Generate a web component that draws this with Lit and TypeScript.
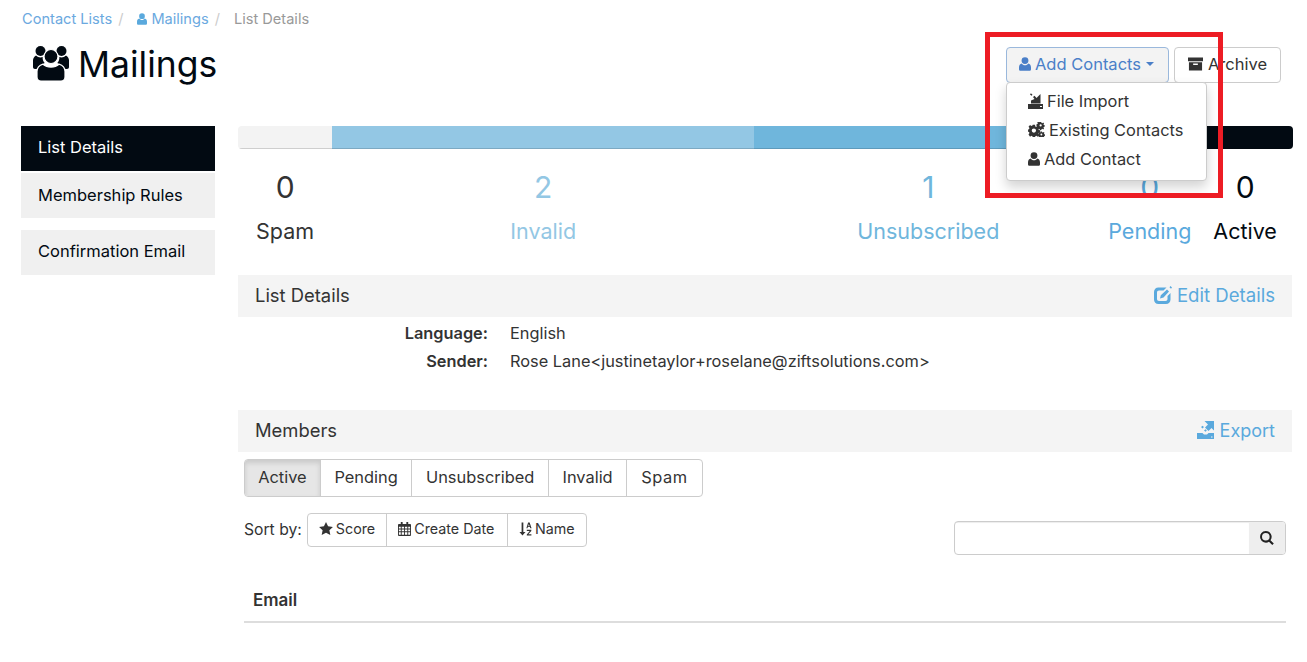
import { LitElement, css, html, svg } from 'lit';
import { customElement } from 'lit/decorators.js';

const icon = (cls: string, box: string, body: unknown) =>
  html`<svg class="icon ${cls}" viewBox=${box} fill="currentColor" aria-hidden="true">${body}</svg>`;

const userIcon = (cls = '') =>
  icon(
    cls,
    '0 0 14 16',
    svg`<path d="M7 8a4 4 0 1 0 0-8 4 4 0 0 0 0 8zM3.200 7.300C1.200 7.700 0 9.400 0 12v2.200C0 15.400.8 16 2 16h10c1.200 0 2-.6 2-1.800V12c0-2.600-1.200-4.300-3.200-4.700C10 8.600 8.700 9.400 7 9.400s-3-.8-3.800-2.100z"/>`
  );

const usersIcon = () =>
  icon(
    'users',
    '0 0 36 35',
    svg`<circle cx="7.500" cy="5" r="5"/><circle cx="28.500" cy="5" r="5"/>
      <path d="M3 9.500c1.200 1.300 3 2 4.500 2 .8 0 1.500-.1 2.200-.4-.3 2.400.5 4.400 2 6-2.800 1-4.700 3-5.200 6H2c-1.200 0-2-.8-2-2v-6.500c0-2.200 1-4 3-5.100zM33 9.500c-1.200 1.300-3 2-4.500 2-.8 0-1.500-.1-2.200-.4.3 2.400-.5 4.400-2 6 2.800 1 4.700 3 5.200 6H34c1.200 0 2-.8 2-2v-6.500c0-2.200-1-4-3-5.100z"/>
      <circle cx="18" cy="10.500" r="7" stroke="#fff" stroke-width="1.200"/>
      <path d="M10 18.200c2 1.800 5 2.900 8 2.900s6-1.100 8-2.900c3.500 1 6 3.600 6 7.300v5.500c0 2.400-1.600 4-4 4H8c-2.400 0-4-1.600-4-4v-5.500c0-3.700 2.500-6.300 6-7.300z" stroke="#fff" stroke-width="1.200"/>`
  );

const trayIcon = (cls: string) =>
  icon(
    cls,
    '0 0 15 16',
    svg`<path fill-rule="evenodd" d="M0 11h15v5H0zM12 13h2v1h-2z"/>
      <path d="M3 10.500V7.500L6.500 6 5 4l1.500-1.200L8.500 5 12.500 1v9.500zM2 1.500l.9-1.200 1.600 1.400-1 1z"/>`
  );

const exportIcon = () =>
  icon(
    'tray-lg',
    '0 0 17 18',
    svg`<path fill-rule="evenodd" d="M0 12h5.500l1.500 1.500h3l1.500-1.500H17v6H0zM14 15.500h1.500v1H14z"/>
      <path d="M7.500 0H17v9.500l-2.500-2.500-3 3-3.500-3.500 3-3zM4 6l1.500-1.300L7 6 5.500 7.400zM7 9.500l1.500-1.200 1.300 1.200-1.300 1.200z"/>`
  );

const gearsIcon = () =>
  icon(
    'gears',
    '0 0 18 16',
    svg`<path fill-rule="evenodd" d="M5 3h2.400l.3 1.700 1.200.5 1.400-1 1.600 1.700-1 1.400.5 1.200 1.600.3v2.400l-1.600.3-.5 1.200 1 1.400-1.600 1.600-1.400-1-1.200.5-.3 1.700H5l-.3-1.700-1.200-.5-1.400 1L.5 13.200l1-1.400-.5-1.200L0 10.300V7.900l1-.3.500-1.200-1-1.400L2.100 3.300l1.400 1 1.200-.5zM6.200 6.800a2.300 2.300 0 1 0 0 4.600 2.300 2.300 0 0 0 0-4.600z"/>
      <path fill-rule="evenodd" d="M14 0l.4 1 .9.200.8-.7 1 1-.6.800.3.900 1 .3v1.400l-1 .3-.3.900.6.800-1 1-.8-.6-.9.300-.4 1h-1.300l-.3-1-.8-.3-.9.600-.9-1 .6-.8-.4-.9-1-.3V2.500l1-.3.400-.9-.6-.8.900-1 .9.700.8-.3.300-.9zM13.400 2.500a1.200 1.200 0 1 0 0 2.400 1.200 1.200 0 0 0 0-2.400z"/>
      <path fill-rule="evenodd" d="M14.800 10l.3.900.8.200.7-.5.900.9-.5.700.3.800.9.300v1.200l-.9.300-.3.700.5.800-.9.900-.7-.6-.8.300-.3.900h-1.200l-.3-.9-.8-.3-.7.600-.9-.9.500-.8-.3-.7-.9-.3v-1.200l.9-.3.300-.8-.5-.7.900-.9.700.5.800-.2.300-.9zM14.200 12.300a1 1 0 1 0 0 2 1 1 0 0 0 0-2z"/>`
  );

const archiveIcon = () =>
  icon(
    'archive',
    '0 0 16 14',
    svg`<path fill-rule="evenodd" d="M0 0h16v4H0zM1 5h14v9H1zM5.500 6.500v1.500h5V6.500z"/>`
  );

const editIcon = () =>
  icon(
    'edit',
    '0 0 18 18',
    svg`<path d="M4.500 1.500h8L9.500 4.500H5C3.800 4.500 3 5.300 3 6.500v6.500c0 1.200.8 2 2 2h6.500c1.200 0 2-.8 2-2V10l3-3v6.500c0 2.700-1.800 4.500-4.500 4.500H4.500C1.800 18 0 16.200 0 13.500V6c0-2.700 1.800-4.500 4.500-4.500z"/>
      <path d="M13 3.500l2 2-5.500 6L6 12.500l.8-3.300zM15.500 1.200l1-1.200L18 1.500l-1 1.200z"/>`
  );

const starIcon = () =>
  icon('star', '0 0 16 15', svg`<path d="M8 0l2.400 5 5.600.7-4.100 3.800 1.100 5.500L8 12.300 3 15l1.100-5.500L0 5.700 5.600 5z"/>`);

const calendarIcon = () =>
  icon(
    'calendar',
    '0 0 14 15',
    svg`<path fill-rule="evenodd" d="M3 0h2v2h4V0h2v2h2c.6 0 1 .4 1 1v11c0 .6-.4 1-1 1H1c-.6 0-1-.4-1-1V3c0-.6.4-1 1-1h2zM1 5v2h2V5zm3 0v2h2.500V5zm3.500 0v2H10V5zM11 5v2h2V5zM1 8v2h2V8zm3 0v2h2.500V8zm3.500 0v2H10V8zM11 8v2h2V8zM1 11v2.800h2V11zm3 0v2.800h2.500V11zm3.500 0v2.800H10V11zM11 11v2.800h2V11z"/>`
  );

const sortAlphaIcon = () =>
  icon(
    'sort-alpha',
    '0 0 15 15',
    svg`<path d="M3 0h2v11h2.500L4 15 .5 11H3z"/>
      <path fill-rule="evenodd" d="M10.500 0h1.800L14.500 6.500h-1.500l-.4-1.200h-2.400L9.800 6.500H8.500zM11.400 1.800l-.8 2.400h1.600zM9 8.500h5.200v1.200l-3.400 4h3.500V15H9v-1.200l3.400-4H9z"/>`
  );

const searchIcon = () =>
  icon(
    'search',
    '0 0 14 14',
    svg`<path fill-rule="evenodd" d="M5.800 0a5.800 5.800 0 0 1 4.700 9.200l3.300 3.300-1.500 1.500-3.300-3.300A5.800 5.800 0 1 1 5.800 0zm0 2a3.800 3.800 0 1 0 0 7.600 3.800 3.800 0 0 0 0-7.600z"/>`
  );

interface Stat {
  label: string;
  count: number;
  width: number;
  fill: string;
  tone: string;
}

const STATS: Stat[] = [
  { label: 'Spam', count: 0, width: 8.93, fill: '#f3f3f3', tone: 'spam' },
  { label: 'Invalid', count: 2, width: 40, fill: '#93c7e4', tone: 'invalid' },
  { label: 'Unsubscribed', count: 1, width: 33, fill: '#6fb6dc', tone: 'unsub' },
  { label: 'Pending', count: 0, width: 9, fill: '#4a9fd0', tone: 'pending' },
  { label: 'Active', count: 0, width: 9.07, fill: '#020a12', tone: 'active' }
];

@customElement('app-root')
export class AppRoot extends LitElement {
  static override styles = css`
    :host {
      display: block;
      position: relative;
      height: 662px;
      overflow: hidden;
      background: #fff;
      color: #333;
      font-family: 'Inter', 'Open Sans', sans-serif;
      font-size: 14px;
    }

    .icon {
      display: inline-block;
      flex: none;
    }

    .crumbs {
      display: flex;
      align-items: center;
      height: 20px;
      padding: 9px 0 0 22px;
      font-size: 14.600px;
      color: #999;
    }
    .crumbs a {
      color: #6ba9e0;
      display: inline-flex;
      align-items: center;
      gap: 4px;
    }
    .crumbs .sep {
      color: #ccc;
      margin: 0 14px 0 6px;
    }
    .crumbs .icon {
      width: 10px;
      height: 12px;
      color: #5aa9dd;
    }

    .head {
      display: flex;
      justify-content: space-between;
      padding: 17px 26px 0 33px;
      height: 80px;
    }
    .title {
      display: flex;
      align-items: flex-start;
      gap: 9px;
      margin: 0;
      font-size: 35.500px;
      font-weight: 400;
      line-height: 38px;
      color: #020a12;
    }
    .users {
      width: 36px;
      height: 35px;
    }

    .actions {
      display: flex;
      align-items: flex-start;
      gap: 5px;
      margin-top: 1px;
      font-size: 16.500px;
    }
    .btn {
      display: flex;
      align-items: center;
      justify-content: center;
      box-sizing: border-box;
      height: 36px;
      padding-bottom: 2px;
      border: 1px solid #ccc;
      border-radius: 4px;
      background: #fff;
      color: #333;
      gap: 4px;
    }
    .add {
      position: relative;
      width: 163px;
      height: 36px;
      padding-right: 2px;
      background: #f3f3f3;
      color: #4a7fc8;
      border-color: #9ab8dc;
    }
    .add > .icon {
      width: 12px;
      height: 14px;
    }
    .caret {
      width: 0;
      height: 0;
      margin-left: 1px;
      border-left: 4px solid transparent;
      border-right: 4px solid transparent;
      border-top: 4px solid currentColor;
    }
    .archive-btn {
      width: 107px;
      gap: 5px;
    }
    .archive {
      width: 15px;
      height: 14px;
    }

    .menu {
      position: absolute;
      z-index: 2;
      top: 34px;
      left: -1px;
      box-sizing: border-box;
      width: 201px;
      height: 99px;
      padding: 3px 0;
      background: #fff;
      border: 1px solid #ccc;
      border-radius: 4px;
      box-shadow: 0 6px 12px rgba(0, 0, 0, 0.175);
      color: #333;
      font-size: 16.400px;
    }
    .menu div {
      display: flex;
      align-items: center;
      height: 29px;
      padding-left: 21px;
      gap: 4px;
    }
    .tray {
      width: 15px;
      height: 16px;
    }
    .gears {
      width: 17px;
      height: 15px;
    }
    .person {
      width: 12px;
      height: 14px;
    }

    .outline {
      position: absolute;
      z-index: 3;
      top: 32px;
      left: 985px;
      box-sizing: border-box;
      width: 238px;
      height: 166px;
      border: 5px solid #ed1c24;
      pointer-events: none;
    }

    .layout {
      display: grid;
      grid-template-columns: 194px 1055px;
      column-gap: 23px;
      padding-left: 21px;
    }

    .side {
      display: flex;
      flex-direction: column;
      font-size: 16.500px;
      color: #020a12;
    }
    .side div {
      display: flex;
      align-items: center;
      box-sizing: border-box;
      height: 45px;
      padding: 0 0 3px 17px;
      background: #f0f0f0;
    }
    .side .on {
      background: #020a12;
      color: #fff;
      margin-bottom: 2px;
    }
    .side .gap {
      margin-bottom: 12px;
      padding-bottom: 2px;
    }

    .bar {
      display: flex;
      position: relative;
      height: 23px;
      border-radius: 4px;
      overflow: hidden;
    }
    .bar::after {
      content: '';
      position: absolute;
      inset: 0;
      box-shadow: inset 0 -1px 0 rgba(0, 0, 0, 0.15);
    }
    .stats {
      display: flex;
      height: 126px;
    }
    .stat {
      display: flex;
      flex-direction: column;
      align-items: center;
      padding-top: 19px;
      box-sizing: border-box;
    }
    .stat b {
      font-size: 30px;
      font-weight: 400;
      line-height: 38px;
    }
    .stat span {
      margin-top: 10px;
      font-size: 21.500px;
      line-height: 30px;
    }
    .spam {
      color: #333;
    }
    .invalid {
      color: #93c7e4;
    }
    .unsub {
      color: #6fb6dc;
    }
    .pending {
      color: #5aa9dd;
    }
    .active {
      color: #020a12;
    }

    .section {
      display: flex;
      align-items: center;
      justify-content: space-between;
      box-sizing: border-box;
      height: 42px;
      margin-right: 1px;
      padding: 0 17px 2px;
      background: #f4f4f4;
      font-size: 18.400px;
      color: #333;
    }
    .section a {
      display: flex;
      align-items: center;
      gap: 5px;
      font-size: 18.600px;
      color: #5aa9dd;
    }
    .section a.short {
      gap: 6px;
      font-size: 18px;
    }
    .edit {
      width: 18px;
      height: 18px;
    }
    .tray-lg {
      width: 17px;
      height: 18px;
    }

    .details {
      display: grid;
      grid-template-columns: 250px 1fr;
      grid-auto-rows: 28px;
      column-gap: 22px;
      align-items: center;
      height: 93px;
      margin: 0;
      padding-top: 2px;
      box-sizing: border-box;
      font-size: 16.350px;
    }
    .details dt {
      text-align: right;
      font-weight: 600;
    }
    .details dd {
      margin: 0;
    }

    .members {
      padding: 7px 7px 0 6px;
    }
    .tabs,
    .sorts {
      display: inline-flex;
      border: 1px solid #ccc;
      border-radius: 4px;
      overflow: hidden;
    }
    .tabs {
      height: 38px;
      box-sizing: border-box;
      font-size: 16.400px;
    }
    .tabs span {
      display: flex;
      align-items: center;
      padding: 0 13.600px 3px;
      border-left: 1px solid #ccc;
    }
    .tabs span:first-child {
      border-left: 0;
      padding: 0 13.200px 3px;
      background: #e6e6e6;
      box-shadow: inset 0 3px 5px rgba(0, 0, 0, 0.125);
    }
    .tabs span:last-child {
      padding: 0 14px 3px;
      letter-spacing: 0.5px;
    }
    .tab-row {
      height: 54px;
    }
    .sort-row {
      display: flex;
      justify-content: space-between;
      height: 62px;
    }
    .sort-left {
      display: flex;
      align-items: flex-start;
      gap: 5px;
      font-size: 15.700px;
    }
    .sort-label {
      line-height: 34px;
    }
    .sorts {
      height: 34px;
      box-sizing: border-box;
      font-size: 14.300px;
    }
    .sorts span {
      display: flex;
      align-items: center;
      gap: 3px;
      padding: 0 11px 3px;
      border-left: 1px solid #ccc;
    }
    .sorts span:first-child {
      border-left: 0;
    }
    .sorts span:nth-child(2) {
      padding-right: 12.500px;
    }
    .star {
      width: 14px;
      height: 13px;
    }
    .calendar {
      width: 13px;
      height: 14px;
    }
    .sort-alpha {
      width: 13px;
      height: 14px;
    }

    .searchbox {
      display: flex;
      box-sizing: border-box;
      width: 332px;
      height: 34px;
      margin-top: 8px;
      border: 1px solid #ccc;
      border-radius: 4px;
      overflow: hidden;
    }
    .searchbox i {
      flex: 1;
      box-shadow: inset 0 1px 1px rgba(0, 0, 0, 0.075);
    }
    .searchbox b {
      display: flex;
      align-items: center;
      justify-content: center;
      width: 36px;
      background: #eee;
      color: #222;
    }
    .search {
      width: 14px;
      height: 14px;
    }

    .table-head {
      display: flex;
      align-items: center;
      box-sizing: border-box;
      height: 43px;
      margin-top: 5px;
      padding: 0 0 2px 9px;
      border-bottom: 2px solid #ddd;
      font-size: 17px;
      font-weight: 600;
      color: #333;
    }
  `;

  override render() {
    return html`
      <nav class="crumbs">
        <a>Contact Lists</a><span class="sep">/</span>
        <a>${userIcon()} Mailings</a><span class="sep">/</span>
        <span>List Details</span>
      </nav>

      <header class="head">
        <h1 class="title">${usersIcon()}Mailings</h1>
        <div class="actions">
          <div class="btn add">
            ${userIcon()} Add Contacts <span class="caret"></span>
            <div class="menu">
              <div>${trayIcon('tray')} File Import</div>
              <div>${gearsIcon()} Existing Contacts</div>
              <div>${userIcon('person')} Add Contact</div>
            </div>
          </div>
          <div class="btn archive-btn">${archiveIcon()} Archive</div>
        </div>
      </header>

      <div class="layout">
        <aside class="side">
          <div class="on">List Details</div>
          <div class="gap">Membership Rules</div>
          <div>Confirmation Email</div>
        </aside>

        <main>
          <div class="bar">
            ${STATS.map(
              (stat) => html`<i style="width:${stat.width}%;background:${stat.fill}"></i>`
            )}
          </div>
          <div class="stats">
            ${STATS.map(
              (stat) => html`
                <div class="stat ${stat.tone}" style="width:${stat.width}%">
                  <b>${stat.count}</b>
                  <span>${stat.label}</span>
                </div>
              `
            )}
          </div>

          <div class="section">List Details <a>${editIcon()} Edit Details</a></div>
          <dl class="details">
            <dt>Language:</dt>
            <dd>English</dd>
            <dt>Sender:</dt>
            <dd>Rose Lane&lt;justinetaylor+roselane@ziftsolutions.com&gt;</dd>
          </dl>

          <div class="section">Members <a class="short">${exportIcon()} Export</a></div>
          <div class="members">
            <div class="tab-row">
              <div class="tabs">
                <span>Active</span><span>Pending</span><span>Unsubscribed</span><span>Invalid</span><span>Spam</span>
              </div>
            </div>
            <div class="sort-row">
              <div class="sort-left">
                <span class="sort-label">Sort by:</span>
                <div class="sorts">
                  <span>${starIcon()} Score</span>
                  <span>${calendarIcon()} Create Date</span>
                  <span>${sortAlphaIcon()} Name</span>
                </div>
              </div>
              <div class="searchbox"><i></i><b>${searchIcon()}</b></div>
            </div>
            <div class="table-head">Email</div>
          </div>
        </main>
      </div>

      <div class="outline"></div>
    `;
  }
}
